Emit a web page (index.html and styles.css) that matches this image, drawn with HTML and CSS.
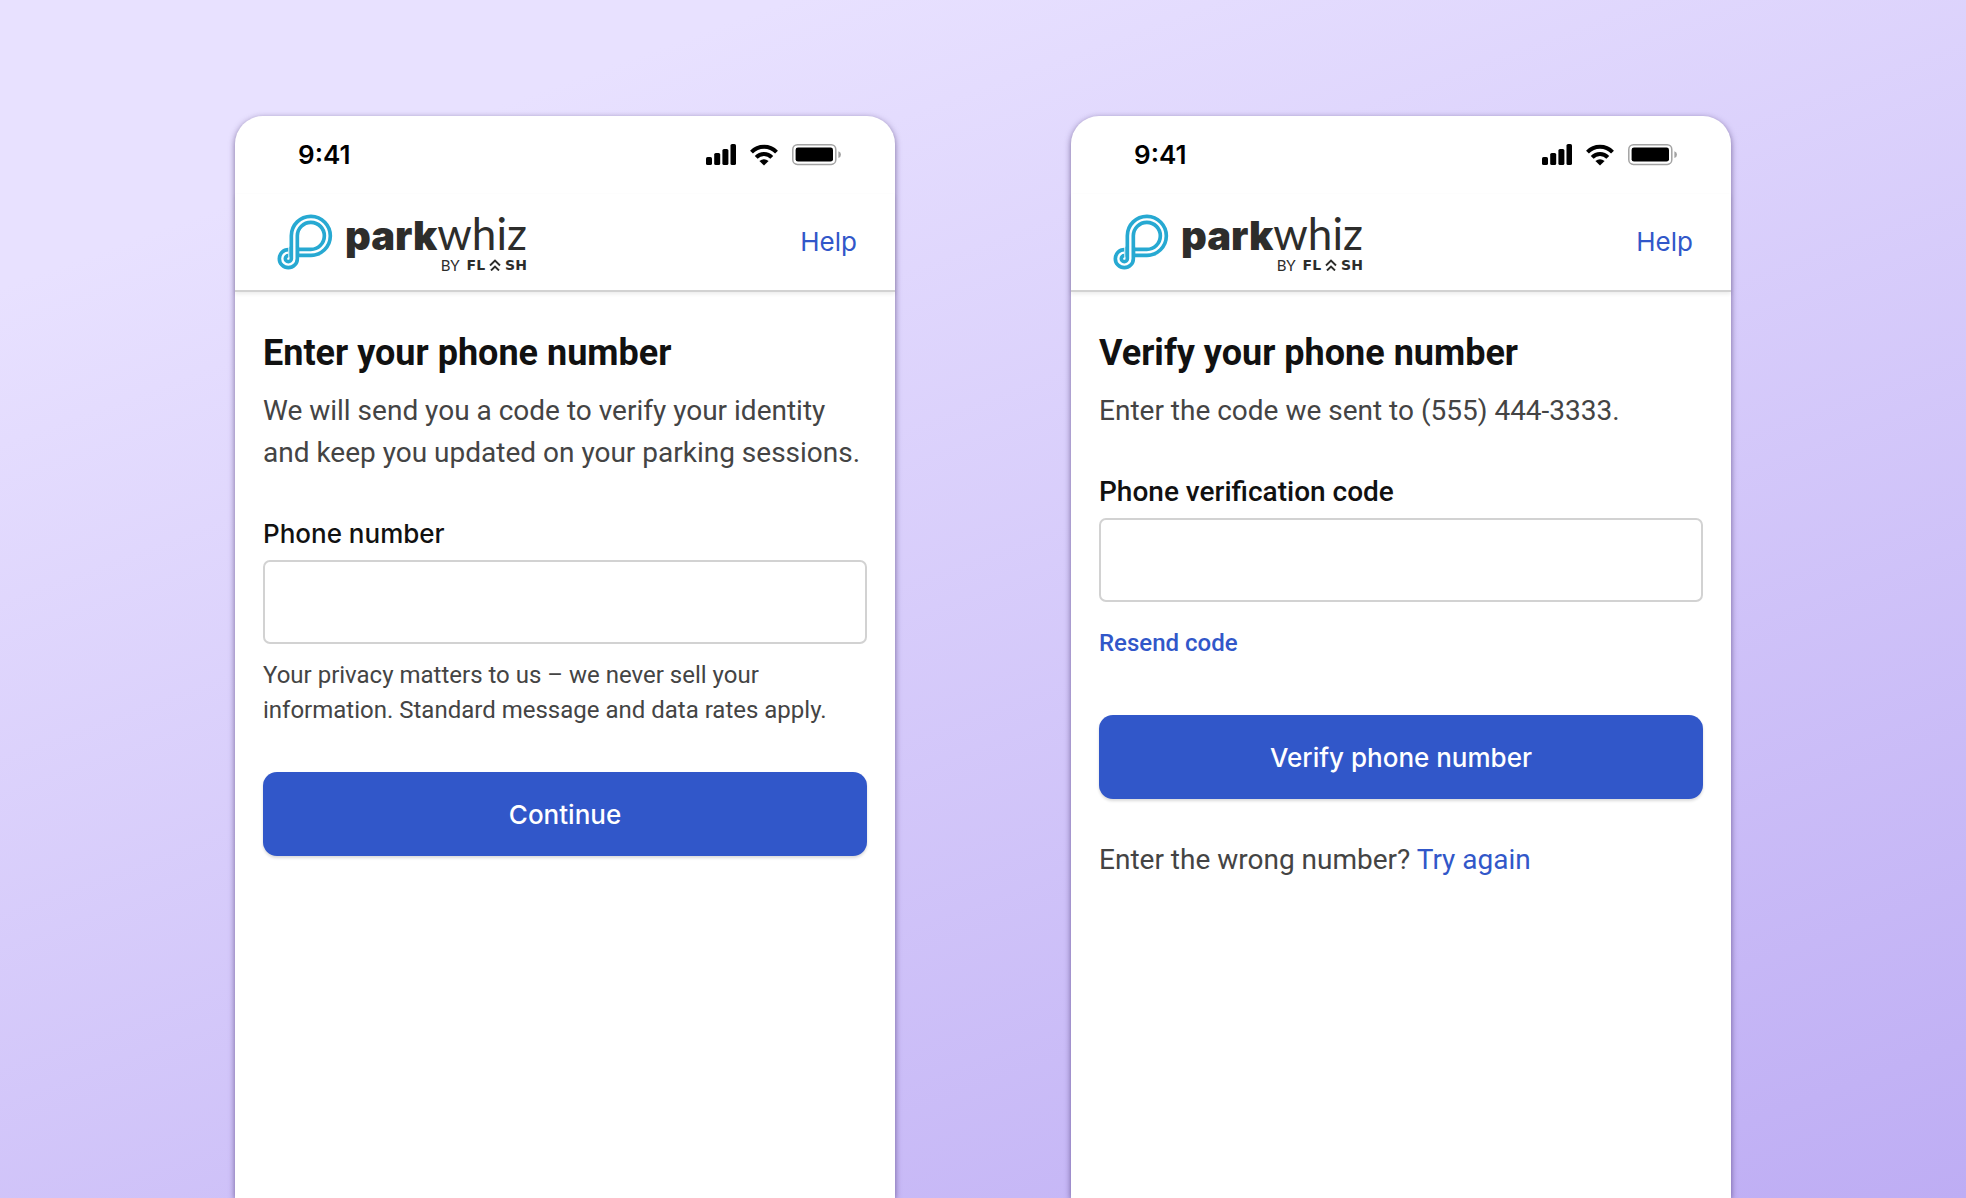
FILE: index.html
```html
<!DOCTYPE html>
<html lang="en">
<head>
	<meta charset="utf-8">
	<meta name="viewport" content="width=device-width, initial-scale=1">
	<title>ParkWhiz - phone number</title>
	<link rel="stylesheet" href="styles.css">
</head>
<body>
<!-- shared icons -->
<svg class="defs" aria-hidden="true">
	<symbol id="signal" viewBox="0 0 30 22">
		<rect x="0" y="13" width="6" height="8" rx="1.6"/>
		<rect x="8.2" y="9" width="6" height="12" rx="1.6"/>
		<rect x="16.4" y="5" width="6" height="16" rx="1.6"/>
		<rect x="24.5" y="0" width="5.5" height="21" rx="1.6"/>
	</symbol>
	<symbol id="wifi" viewBox="0 0 28 21">
		<path d="M1.500 7.6A17.4 17.4 0 0 1 26.500 7.6" fill="none" stroke="#000" stroke-width="4"/>
		<path d="M6.2 12.8A10.8 10.8 0 0 1 21.8 12.8" fill="none" stroke="#000" stroke-width="4"/>
		<path d="M14 21L9.4 16.4Q14 13 18.6 16.4Z"/>
	</symbol>
	<symbol id="battery" viewBox="0 0 50 22">
		<rect x="0.8" y="0.8" width="43" height="19.6" rx="4.6" fill="none" stroke="#a3a3a3" stroke-width="1.5"/>
		<rect x="3.6" y="3.6" width="37.4" height="14" rx="2.4"/>
		<path d="M46.4 7.2Q49 8 49 10.6T46.4 14Z" fill="#a3a3a3"/>
	</symbol>
	<symbol id="mark" viewBox="171 342 168 168">
		<g fill="none" stroke="#27a9d2" stroke-width="29">
			<path d="M223 470V407A49.500 49.500 0 1 1 272 457H230"/>
			<path d="M223 440V476A18 18 0 1 1 205 458"/>
		</g>
		<g fill="none" stroke="#fff" stroke-width="7">
			<path d="M238 457H272A49.500 49.500 0 1 0 223 407V476A18 18 0 1 1 205 458"/>
		</g>
	</symbol>
	<symbol id="chevrons" viewBox="0 0 12 12">
		<path d="M1 6.500L6 1.500L11 6.500M2 11.500L6 7.500L10 11.500" fill="none" stroke="#2d2d2b" stroke-width="1.9"/>
	</symbol>
</svg>

<main class="stage">
	<section class="phone">
		<div class="status">
			<span class="time">9:41</span>
			<div class="status-icons">
				<svg class="signal"><use href="#signal"/></svg>
				<svg class="wifi"><use href="#wifi"/></svg>
				<svg class="battery"><use href="#battery"/></svg>
			</div>
		</div>
		<header class="header">
			<div class="logo">
				<svg class="mark"><use href="#mark"/></svg>
				<div class="brand">
					<div class="name"><b>park</b>whiz</div>
					<div class="by"><span>BY</span><b>FL</b><svg class="chevrons"><use href="#chevrons"/></svg><b>SH</b></div>
				</div>
			</div>
			<a class="help" href="#">Help</a>
		</header>
		<form class="content">
			<h1>Enter your phone number</h1>
			<p class="intro">We will send you a code to verify your identity and keep you updated on your parking sessions.</p>
			<label class="label label-system" for="phone">Phone number</label>
			<input class="field" id="phone" type="tel">
			<p class="note">Your privacy matters to us – we never sell your information. Standard message and data rates apply.</p>
			<button class="button" type="button">Continue</button>
		</form>
	</section>

	<section class="phone">
		<div class="status">
			<span class="time">9:41</span>
			<div class="status-icons">
				<svg class="signal"><use href="#signal"/></svg>
				<svg class="wifi"><use href="#wifi"/></svg>
				<svg class="battery"><use href="#battery"/></svg>
			</div>
		</div>
		<header class="header">
			<div class="logo">
				<svg class="mark"><use href="#mark"/></svg>
				<div class="brand">
					<div class="name"><b>park</b>whiz</div>
					<div class="by"><span>BY</span><b>FL</b><svg class="chevrons"><use href="#chevrons"/></svg><b>SH</b></div>
				</div>
			</div>
			<a class="help" href="#">Help</a>
		</header>
		<form class="content">
			<h1>Verify your phone number</h1>
			<p class="intro">Enter the code we sent to (555) 444-3333.</p>
			<label class="label" for="code">Phone verification code</label>
			<input class="field" id="code" type="text" inputmode="numeric">
			<a class="resend" href="#">Resend code</a>
			<button class="button" type="button">Verify phone number</button>
			<p class="again">Enter the wrong number? <a href="#">Try again</a></p>
		</form>
	</section>
</main>
</body>
</html>
```

FILE: styles.css
```css
* {
	margin: 0;
	padding: 0;
	box-sizing: border-box;
}
body {
	font-family: Roboto, "Liberation Sans", sans-serif;
	font-size: 28px;
	line-height: 42px;
	color: #444;
	background: linear-gradient(160deg, #e8e1ff 15%, #beadf4 100%);
}
a {
	color: #3157c9;
	text-decoration: none;
}
.defs {
	display: none;
}
.stage {
	display: flex;
	justify-content: center;
	gap: 176px;
	min-height: 100vh;
	padding: 116px 48px 0;
}
.phone {
	flex: 0 1 660px;
	background: #fff;
	border-radius: 28px 28px 0 0;
	box-shadow: 0 2px 6px rgba(50, 30, 90, .6);
}

/* status bar */
.status {
	display: flex;
	justify-content: space-between;
	align-items: center;
	height: 78px;
	padding: 0 53px 0 63px;
}
.time {
	font-family: Inter, sans-serif;
	font-size: 26px;
	font-weight: 600;
	color: #000;
}
.status-icons {
	display: flex;
	gap: 14px;
}
.signal {
	width: 30px;
	height: 22px;
}
.wifi {
	width: 28px;
	height: 22px;
}
.battery {
	width: 50px;
	height: 22px;
}

/* header */
.header {
	display: flex;
	justify-content: space-between;
	align-items: center;
	height: 98px;
	padding: 0 38px 0 42px;
	border-bottom: 2px solid #d2d2d2;
	box-shadow: 0 2px 4px rgba(0, 0, 0, .08);
}
.logo {
	display: flex;
	align-items: center;
	gap: 12px;
}
.mark {
	width: 56px;
	height: 56px;
}
.brand {
	padding-bottom: 2px;
	font-family: Lato, sans-serif;
	color: #2d2d2b;
}
.name {
	font-size: 44px;
	line-height: 44px;
}
.name b {
	font-family: Inter, sans-serif;
	font-size: 40px;
	font-weight: 900;
}
.by {
	display: flex;
	justify-content: flex-end;
	align-items: center;
	gap: 4px;
	font-size: 15px;
	line-height: 14px;
}
.by span {
	margin-right: 3px;
}
.by b {
	font-family: "DejaVu Sans", sans-serif;
	font-size: 14px;
}
.chevrons {
	width: 12px;
	height: 12px;
}
.help {
	font-family: Inter, sans-serif;
	font-size: 26px;
}

/* form */
.content {
	padding: 40px 28px;
}
h1 {
	font-size: 36px;
	line-height: 42px;
	font-weight: 700;
	color: #111;
}
.intro {
	margin-top: 16px;
}
.label {
	display: block;
	margin-top: 39px;
	font-weight: 500;
	color: #111;
}
.label-system {
	font-family: Inter, sans-serif;
	font-size: 26px;
}
.field {
	display: block;
	width: 100%;
	height: 84px;
	margin-top: 5px;
	padding: 0 20px;
	font: inherit;
	background: #fff;
	border: 2px solid #d2d2d2;
	border-radius: 7px;
}
.note {
	margin-top: 14px;
	font-size: 24px;
	line-height: 35px;
}
.resend {
	display: block;
	margin-top: 24px;
	font-size: 24px;
	line-height: 35px;
	font-weight: 500;
}
.button {
	display: block;
	width: 100%;
	height: 84px;
	margin-top: 44px;
	font-family: Inter, sans-serif;
	font-size: 26px;
	font-weight: 500;
	color: #fff;
	background: #3157c9;
	border: 0;
	border-radius: 14px;
	box-shadow: 0 2px 3px rgba(0, 0, 0, .15);
	cursor: pointer;
}
.resend + .button {
	margin-top: 54px;
}
.again {
	margin-top: 40px;
}
```
